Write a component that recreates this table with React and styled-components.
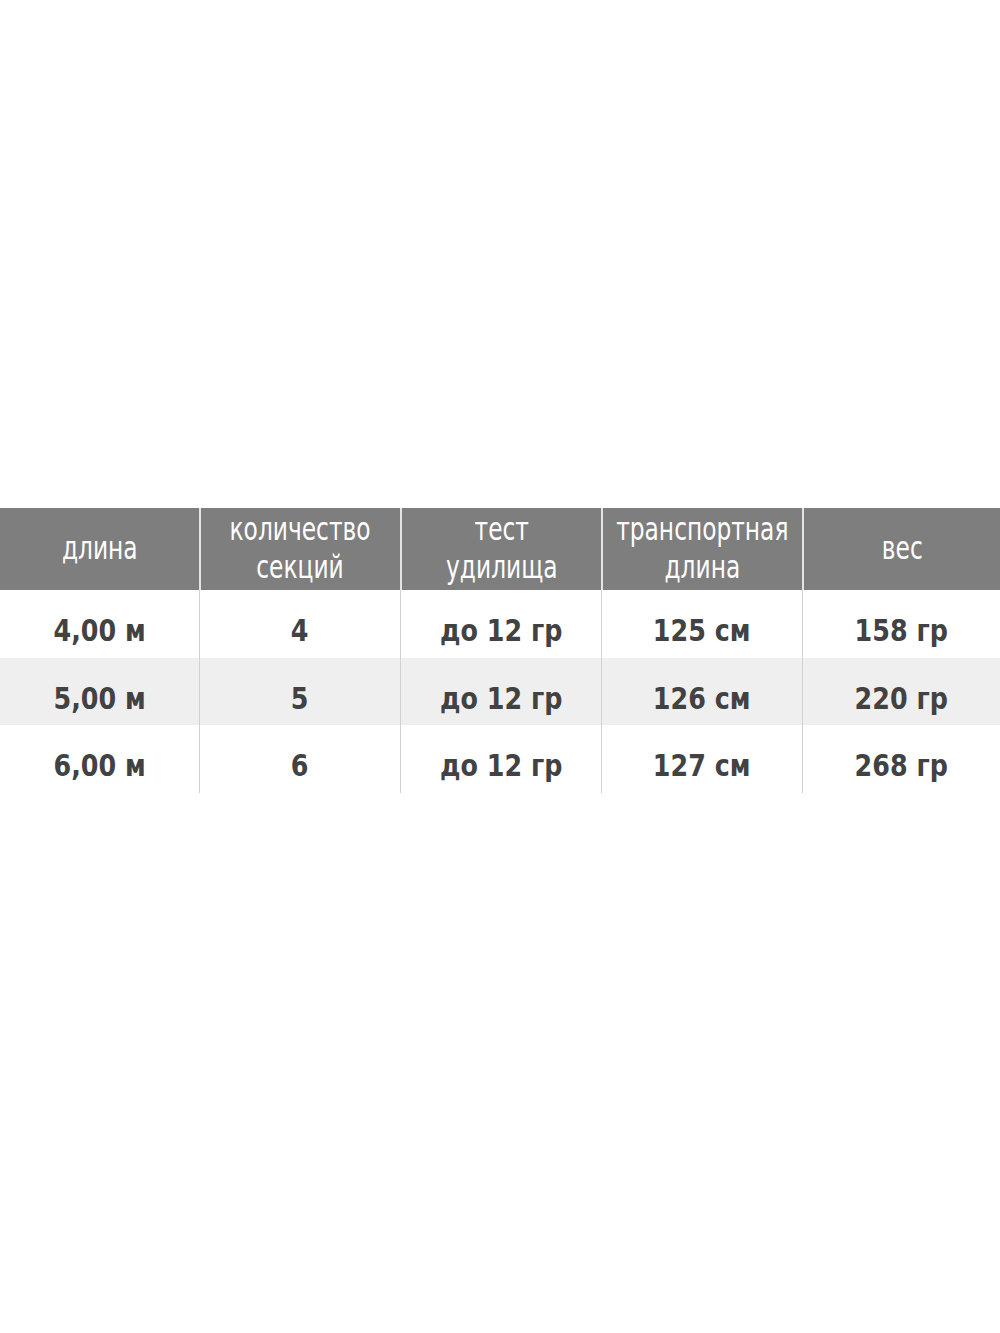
import React from 'react';
import styled, { createGlobalStyle } from 'styled-components';

const GlobalStyle = createGlobalStyle`
  html, body {
    margin: 0;
    padding: 0;
    background: #ffffff;
  }
  body {
    font-family: "DejaVu Sans Condensed", "DejaVu Sans", sans-serif;
  }
`;

const Page = styled.div`
  width: 1000px;
  height: 1333px;
  padding-top: 508px;
  box-sizing: border-box;
`;

const Table = styled.div`
  display: grid;
  grid-template-columns: 199px 201px 201px 201px 198px;
`;

const HeadCell = styled.div`
  background: #7e7e7e;
  color: #ffffff;
  height: 82px;
  padding-bottom: 3px;
  display: flex;
  align-items: center;
  justify-content: center;
  text-align: center;
  font-size: 32px;
  line-height: 38px;
  white-space: nowrap;
  border-left: ${p => (p.first ? 'none' : '2px solid #e4e4e4')};
  box-sizing: border-box;
`;

const Narrow = styled.span`
  display: inline-block;
  transform: scaleX(${p => p.sx});
  transform-origin: center;
`;

const Cell = styled.div`
  background: ${p => (p.shade ? '#efefef' : '#ffffff')};
  color: #424242;
  height: ${p => p.h}px;
  padding-top: 12px;
  display: flex;
  align-items: center;
  justify-content: center;
  font-size: 31px;
  font-weight: bold;
  white-space: nowrap;
  border-left: ${p => (p.first ? 'none' : '1px solid #d2d2d2')};
  box-sizing: border-box;
`;

const headers = [
  ['длина'],
  ['количество', 'секций'],
  ['тест', 'удилища'],
  ['транспортная', 'длина'],
  ['вес'],
];

const rows = [
  { h: 68, shade: false, cells: ['4,00 м', '4', 'до 12 гр', '125 см', '158 гр'] },
  { h: 67, shade: true, cells: ['5,00 м', '5', 'до 12 гр', '126 см', '220 гр'] },
  { h: 68, shade: false, cells: ['6,00 м', '6', 'до 12 гр', '127 см', '268 гр'] },
];

const App = () => {
  return (
    <Page>
      <GlobalStyle />
      <Table>
        {headers.map((lines, i) => (
          <HeadCell key={i} first={i === 0}>
            <Narrow sx={0.81}>
              {lines.map(l => (
                <div key={l}>{l}</div>
              ))}
            </Narrow>
          </HeadCell>
        ))}
        {rows.map((row, r) =>
          row.cells.map((c, i) => (
            <Cell key={`${r}-${i}`} first={i === 0} shade={row.shade} h={row.h}>
              <Narrow sx={0.91}>{c}</Narrow>
            </Cell>
          ))
        )}
      </Table>
    </Page>
  );
};

export default App;
